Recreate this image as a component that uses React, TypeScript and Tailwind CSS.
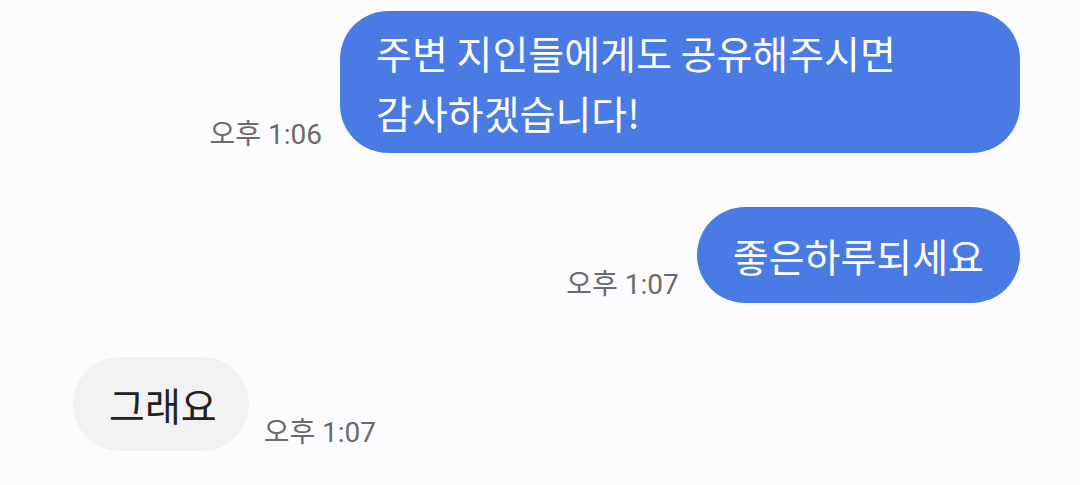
import React from "react"

type Msg = {
  text: string
  time: string
  mine: boolean
}

const messages: Msg[] = [
  { text: "주변 지인들에게도 공유해주시면 감사하겠습니다!", time: "오후 1:06", mine: true },
  { text: "좋은하루되세요", time: "오후 1:07", mine: true },
  { text: "그래요", time: "오후 1:07", mine: false },
]

function Time({ value }: { value: string }) {
  return (
    <span
      className="shrink-0 pb-[4px] text-[28px] leading-none text-[#6b6b6b] whitespace-nowrap"
      style={{ fontFamily: 'Roboto, "Noto Sans CJK KR", sans-serif' }}
    >
      {value}
    </span>
  )
}

function Bubble({ msg }: { msg: Msg }) {
  if (msg.mine) {
    return (
      <div className="flex items-end justify-end gap-[18px]">
        <Time value={msg.time} />
        <div className="flex min-h-[96px] max-w-[680px] items-center rounded-[48px] bg-[#4a7be5] px-9 py-[11px] text-[39px] leading-[60px] text-white break-keep">
          {msg.text}
        </div>
      </div>
    )
  }
  return (
    <div className="flex items-end justify-start gap-[15px]">
      <div className="flex min-h-[94px] items-center rounded-[48px] bg-[#f2f2f2] pl-9 pr-8 text-[39px] leading-[60px] text-[#222222]">
        {msg.text}
      </div>
      <Time value={msg.time} />
    </div>
  )
}

export default function App() {
  return (
    <div
      className="flex h-[485px] w-full flex-col gap-[54px] overflow-hidden bg-[#fcfcfe] pl-[73px] pr-[60px] pt-[11px]"
      style={{ fontFamily: '"Noto Sans CJK KR", "Noto Sans", sans-serif' }}
    >
      {messages.map((m, i) => (
        <Bubble key={i} msg={m} />
      ))}
    </div>
  )
}
